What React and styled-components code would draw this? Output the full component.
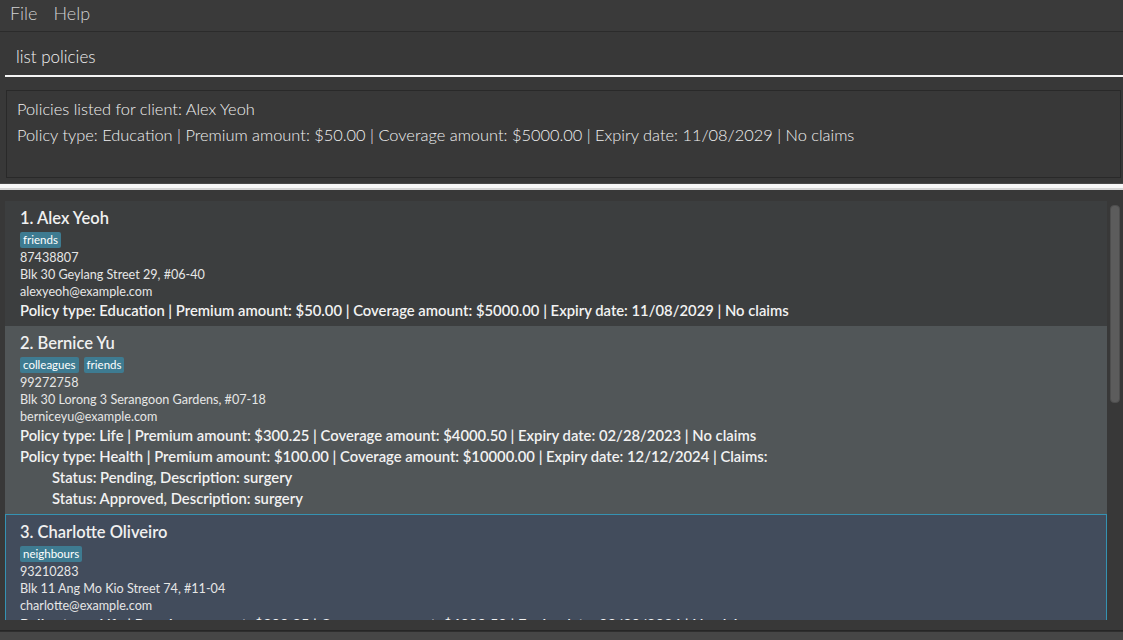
import React from "react";
import styled, { createGlobalStyle } from "styled-components";

const GlobalStyle = createGlobalStyle`
  html, body {
    margin: 0;
    padding: 0;
    background: #383838;
  }
  * {
    box-sizing: border-box;
  }
`;

const clients = [
  {
    name: "Alex Yeoh",
    tags: ["friends"],
    phone: "87438807",
    address: "Blk 30 Geylang Street 29, #06-40",
    email: "alexyeoh@example.com",
    policies: [
      {
        text: "Policy type: Education | Premium amount: $50.00 | Coverage amount: $5000.00 | Expiry date: 11/08/2029 | No claims",
        claims: []
      }
    ]
  },
  {
    name: "Bernice Yu",
    tags: ["colleagues", "friends"],
    phone: "99272758",
    address: "Blk 30 Lorong 3 Serangoon Gardens, #07-18",
    email: "berniceyu@example.com",
    policies: [
      {
        text: "Policy type: Life | Premium amount: $300.25 | Coverage amount: $4000.50 | Expiry date: 02/28/2023 | No claims",
        claims: []
      },
      {
        text: "Policy type: Health | Premium amount: $100.00 | Coverage amount: $10000.00 | Expiry date: 12/12/2024 | Claims:",
        claims: [
          "Status: Pending, Description: surgery",
          "Status: Approved, Description: surgery"
        ]
      }
    ]
  },
  {
    name: "Charlotte Oliveiro",
    tags: ["neighbours"],
    phone: "93210283",
    address: "Blk 11 Ang Mo Kio Street 74, #11-04",
    email: "charlotte@example.com",
    policies: [
      {
        text: "Policy type: Life | Premium amount: $300.25 | Coverage amount: $4000.50 | Expiry date: 03/30/2024 | No claims",
        claims: []
      }
    ]
  }
];

const FONT = `"Lato", "Open Sans", "Noto Sans", sans-serif`;

export default function App() {
  return (
    <>
      <GlobalStyle />
      <Window>
        <MenuBar>
          <MenuItem>File</MenuItem>
          <MenuItem>Help</MenuItem>
        </MenuBar>
        <CommandBox>
          <CommandInput>list policies</CommandInput>
        </CommandBox>
        <ResultPane>
          <ResultBox>
            <ResultLine>Policies listed for client: Alex Yeoh</ResultLine>
            <ResultLine>
              Policy type: Education | Premium amount: $50.00 | Coverage amount: $5000.00 | Expiry date: 11/08/2029 | No claims
            </ResultLine>
          </ResultBox>
        </ResultPane>
        <Divider />
        <ListPane>
          <CardList>
            {clients.map((c, i) => (
              <Card key={c.name} $variant={i}>
                <Name>
                  {i + 1}.&nbsp;{c.name}
                </Name>
                <Tags>
                  {c.tags.map(t => (
                    <Tag key={t}>{t}</Tag>
                  ))}
                </Tags>
                <Detail>{c.phone}</Detail>
                <Detail>{c.address}</Detail>
                <Detail>{c.email}</Detail>
                {c.policies.map((p, j) => (
                  <React.Fragment key={j}>
                    <PolicyLine>{p.text}</PolicyLine>
                    {p.claims.map(cl => (
                      <ClaimLine key={cl}>{cl}</ClaimLine>
                    ))}
                  </React.Fragment>
                ))}
              </Card>
            ))}
          </CardList>
          <ScrollTrack>
            <ScrollThumb />
          </ScrollTrack>
        </ListPane>
        <StatusBar />
      </Window>
    </>
  );
}

const Window = styled.div`
  width: 1123px;
  height: 640px;
  display: flex;
  flex-direction: column;
  background: #383838;
  overflow: hidden;
  font-family: ${FONT};
`;

const MenuBar = styled.div`
  height: 32px;
  flex: none;
  display: flex;
  align-items: center;
  gap: 16px;
  padding: 0 0 5px 10px;
  background: #3a3a3a;
  border-bottom: 1px solid #2b2b2b;
`;

const MenuItem = styled.span`
  color: #d2d2d2;
  font-size: 18px;
  font-weight: 300;
`;

const CommandBox = styled.div`
  flex: none;
  padding: 0 0 0 5px;
  background: #383838;
`;

const CommandInput = styled.div`
  height: 45px;
  display: flex;
  align-items: center;
  padding: 5px 0 0 11px;
  color: #f2f2f2;
  font-size: 17px;
  font-weight: 300;
  border-bottom: 2px solid #f5f5f5;
`;

const ResultPane = styled.div`
  flex: none;
  padding: 13px 2px 5px 6px;
`;

const ResultBox = styled.div`
  height: 88px;
  padding: 7px 10px;
  border: 1px solid #292929;
  display: flex;
  flex-direction: column;
  gap: 4px;
`;

const ResultLine = styled.div`
  color: #f0f0f0;
  font-size: 16.4px;
  font-weight: 300;
  line-height: 22px;
  white-space: nowrap;
`;

const Divider = styled.div`
  flex: none;
  height: 7px;
  background: linear-gradient(#f8f8f8 0 4px, #d6d6d6 4px);
  border-top: 1px solid #4a4a4a;
`;

const ListPane = styled.div`
  flex: 1;
  min-height: 0;
  display: flex;
  padding: 11px 3px 10px 5px;
  gap: 3px;
  border-bottom: 1px solid #262626;
`;

const CardList = styled.div`
  flex: 1;
  min-width: 0;
  display: flex;
  flex-direction: column;
  overflow: hidden;
`;

const cardBg = ["#3c3e3f", "#515658", "#424c5c"];

const Card = styled.div`
  flex: none;
  padding: 5px 15px 5px 15px;
  background: ${p => cardBg[p.$variant]};
  border: ${p => (p.$variant === 2 ? "1px solid #3592b2" : "none")};
  padding-left: ${p => (p.$variant === 2 ? "14px" : "15px")};
  color: #ffffff;
`;

const Name = styled.div`
  font-size: 16.5px;
  font-weight: 600;
  line-height: 24px;
  color: #f0f0f0;
`;

const Tags = styled.div`
  display: flex;
  gap: 5px;
  margin: 2px 0 1px;
`;

const Tag = styled.span`
  height: 16px;
  display: flex;
  align-items: center;
  background: #3e7b91;
  color: #ffffff;
  font-size: 11.5px;
  padding: 0 3px 1px;
  border-radius: 2px;
`;

const Detail = styled.div`
  font-size: 12.6px;
  line-height: 17px;
  color: #e6e6e6;
`;

const PolicyLine = styled.div`
  font-size: 14.8px;
  font-weight: 600;
  line-height: 21px;
  color: #f2f2f2;
  white-space: nowrap;
`;

const ClaimLine = styled(PolicyLine)`
  padding-left: 32px;
`;

const ScrollTrack = styled.div`
  flex: none;
  width: 10px;
  padding-top: 4px;
`;

const ScrollThumb = styled.div`
  width: 10px;
  height: 198px;
  border-radius: 4px;
  background: #5c5c5c;
  border: 1px solid #4e4e4e;
`;

const StatusBar = styled.div`
  flex: none;
  height: 9px;
  background: #464646;
  border-top: 1px solid #2e2e2e;
`;
